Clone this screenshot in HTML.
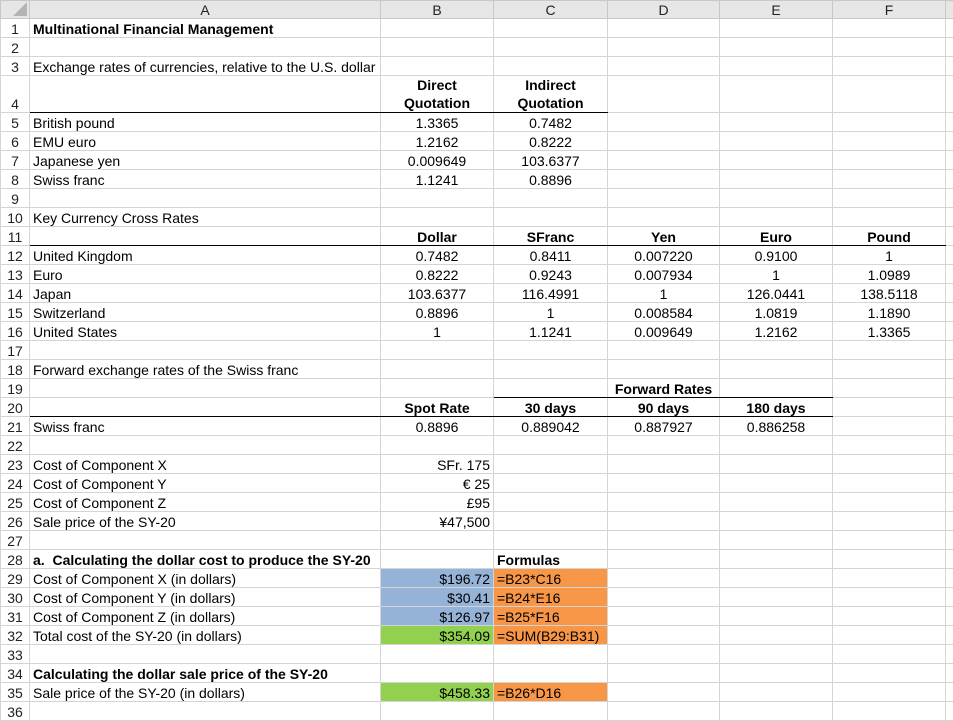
<!DOCTYPE html>
<html><head><meta charset="utf-8"><style>
body{margin:0;background:#fff;width:953px;height:719px;overflow:hidden;font-family:"Liberation Sans",Arial,sans-serif;font-size:14px;color:#000;position:relative}
table{border-collapse:collapse;table-layout:fixed;position:absolute;left:0;top:0;width:966px}
td{border:1px solid #d4d4d4;padding:0 3px;white-space:nowrap;overflow:visible;height:18px;line-height:16px;vertical-align:bottom;text-align:center}
td.a{text-align:left;overflow:visible}
td.r{text-align:right}
td.l{text-align:left}
td.h{text-align:center;color:#222;padding:0 2px;border-color:#d4d4d4}
tr.hd td{background:#e6e6e6;border-color:#c8c8c8;height:17px;line-height:15px;color:#222}
b{font-weight:bold}
.bb{border-bottom:1.5px solid #000}
.bl{background:#95b3d7}.or{background:#f79646}.gr{background:#92d050}
tr.t4 td{height:35px}
</style></head><body>
<table>
<colgroup><col style="width:29px"><col style="width:351px"><col style="width:113px"><col style="width:114px"><col style="width:112px"><col style="width:113px"><col style="width:113px"><col style="width:21px"></colgroup>
<tr class="hd"><td style="position:relative"><svg width="14" height="14" style="position:absolute;right:2px;bottom:2px"><polygon points="14,0 14,14 0,14" fill="#b4b4b4"/></svg></td><td>A</td><td>B</td><td>C</td><td>D</td><td>E</td><td>F</td><td></td></tr>
<tr><td class="h">1</td><td class="a"><b>Multinational Financial Management</b></td><td></td><td></td><td></td><td></td><td></td><td></td></tr>
<tr><td class="h">2</td><td></td><td></td><td></td><td></td><td></td><td></td><td></td></tr>
<tr><td class="h">3</td><td class="a">Exchange rates of currencies, relative to the U.S. dollar</td><td></td><td></td><td></td><td></td><td></td><td></td></tr>
<tr class="t4"><td class="h">4</td><td class="bb"></td><td class="bb" style="line-height:18px"><b>Direct<br>Quotation</b></td><td class="bb" style="line-height:18px"><b>Indirect<br>Quotation</b></td><td></td><td></td><td></td><td></td></tr>
<tr><td class="h">5</td><td class="a">British pound</td><td>1.3365</td><td>0.7482</td><td></td><td></td><td></td><td></td></tr>
<tr><td class="h">6</td><td class="a">EMU euro</td><td>1.2162</td><td>0.8222</td><td></td><td></td><td></td><td></td></tr>
<tr><td class="h">7</td><td class="a">Japanese yen</td><td>0.009649</td><td>103.6377</td><td></td><td></td><td></td><td></td></tr>
<tr><td class="h">8</td><td class="a">Swiss franc</td><td>1.1241</td><td>0.8896</td><td></td><td></td><td></td><td></td></tr>
<tr><td class="h">9</td><td></td><td></td><td></td><td></td><td></td><td></td><td></td></tr>
<tr><td class="h">10</td><td class="a">Key Currency Cross Rates</td><td></td><td></td><td></td><td></td><td></td><td></td></tr>
<tr><td class="h">11</td><td class="bb"></td><td class="bb"><b>Dollar</b></td><td class="bb"><b>SFranc</b></td><td class="bb"><b>Yen</b></td><td class="bb"><b>Euro</b></td><td class="bb"><b>Pound</b></td><td></td></tr>
<tr><td class="h">12</td><td class="a">United Kingdom</td><td>0.7482</td><td>0.8411</td><td>0.007220</td><td>0.9100</td><td>1</td><td></td></tr>
<tr><td class="h">13</td><td class="a">Euro</td><td>0.8222</td><td>0.9243</td><td>0.007934</td><td>1</td><td>1.0989</td><td></td></tr>
<tr><td class="h">14</td><td class="a">Japan</td><td>103.6377</td><td>116.4991</td><td>1</td><td>126.0441</td><td>138.5118</td><td></td></tr>
<tr><td class="h">15</td><td class="a">Switzerland</td><td>0.8896</td><td>1</td><td>0.008584</td><td>1.0819</td><td>1.1890</td><td></td></tr>
<tr><td class="h">16</td><td class="a">United States</td><td>1</td><td>1.1241</td><td>0.009649</td><td>1.2162</td><td>1.3365</td><td></td></tr>
<tr><td class="h">17</td><td></td><td></td><td></td><td></td><td></td><td></td><td></td></tr>
<tr><td class="h">18</td><td class="a">Forward exchange rates of the Swiss franc</td><td></td><td></td><td></td><td></td><td></td><td></td></tr>
<tr><td class="h">19</td><td></td><td></td><td class="bb"></td><td class="bb" style="overflow:visible"><b>Forward Rates</b></td><td class="bb"></td><td></td><td></td></tr>
<tr><td class="h">20</td><td class="bb"></td><td class="bb"><b>Spot Rate</b></td><td class="bb"><b>30 days</b></td><td class="bb"><b>90 days</b></td><td class="bb"><b>180 days</b></td><td></td><td></td></tr>
<tr><td class="h">21</td><td class="a">Swiss franc</td><td>0.8896</td><td>0.889042</td><td>0.887927</td><td>0.886258</td><td></td><td></td></tr>
<tr><td class="h">22</td><td></td><td></td><td></td><td></td><td></td><td></td><td></td></tr>
<tr><td class="h">23</td><td class="a">Cost of Component X</td><td class="r">SFr. 175</td><td></td><td></td><td></td><td></td><td></td></tr>
<tr><td class="h">24</td><td class="a">Cost of Component Y</td><td class="r">€ 25</td><td></td><td></td><td></td><td></td><td></td></tr>
<tr><td class="h">25</td><td class="a">Cost of Component Z</td><td class="r">£95</td><td></td><td></td><td></td><td></td><td></td></tr>
<tr><td class="h">26</td><td class="a">Sale price of the SY-20</td><td class="r">¥47,500</td><td></td><td></td><td></td><td></td><td></td></tr>
<tr><td class="h">27</td><td></td><td></td><td></td><td></td><td></td><td></td><td></td></tr>
<tr><td class="h">28</td><td class="a"><b>a.&nbsp; Calculating the dollar cost to produce the SY-20</b></td><td></td><td class="l"><b>Formulas</b></td><td></td><td></td><td></td><td></td></tr>
<tr><td class="h">29</td><td class="a">Cost of Component X (in dollars)</td><td class="r bl">$196.72</td><td class="l or">=B23*C16</td><td></td><td></td><td></td><td></td></tr>
<tr><td class="h">30</td><td class="a">Cost of Component Y (in dollars)</td><td class="r bl">$30.41</td><td class="l or">=B24*E16</td><td></td><td></td><td></td><td></td></tr>
<tr><td class="h">31</td><td class="a">Cost of Component Z (in dollars)</td><td class="r bl">$126.97</td><td class="l or">=B25*F16</td><td></td><td></td><td></td><td></td></tr>
<tr><td class="h">32</td><td class="a">Total cost of the SY-20 (in dollars)</td><td class="r gr">$354.09</td><td class="l or">=SUM(B29:B31)</td><td></td><td></td><td></td><td></td></tr>
<tr><td class="h">33</td><td></td><td></td><td></td><td></td><td></td><td></td><td></td></tr>
<tr><td class="h">34</td><td class="a"><b>Calculating the dollar sale price of the SY-20</b></td><td></td><td></td><td></td><td></td><td></td><td></td></tr>
<tr><td class="h">35</td><td class="a">Sale price of the SY-20 (in dollars)</td><td class="r gr">$458.33</td><td class="l or">=B26*D16</td><td></td><td></td><td></td><td></td></tr>
<tr><td class="h">36</td><td></td><td></td><td></td><td></td><td></td><td></td><td></td></tr>
</table>
</body></html>
